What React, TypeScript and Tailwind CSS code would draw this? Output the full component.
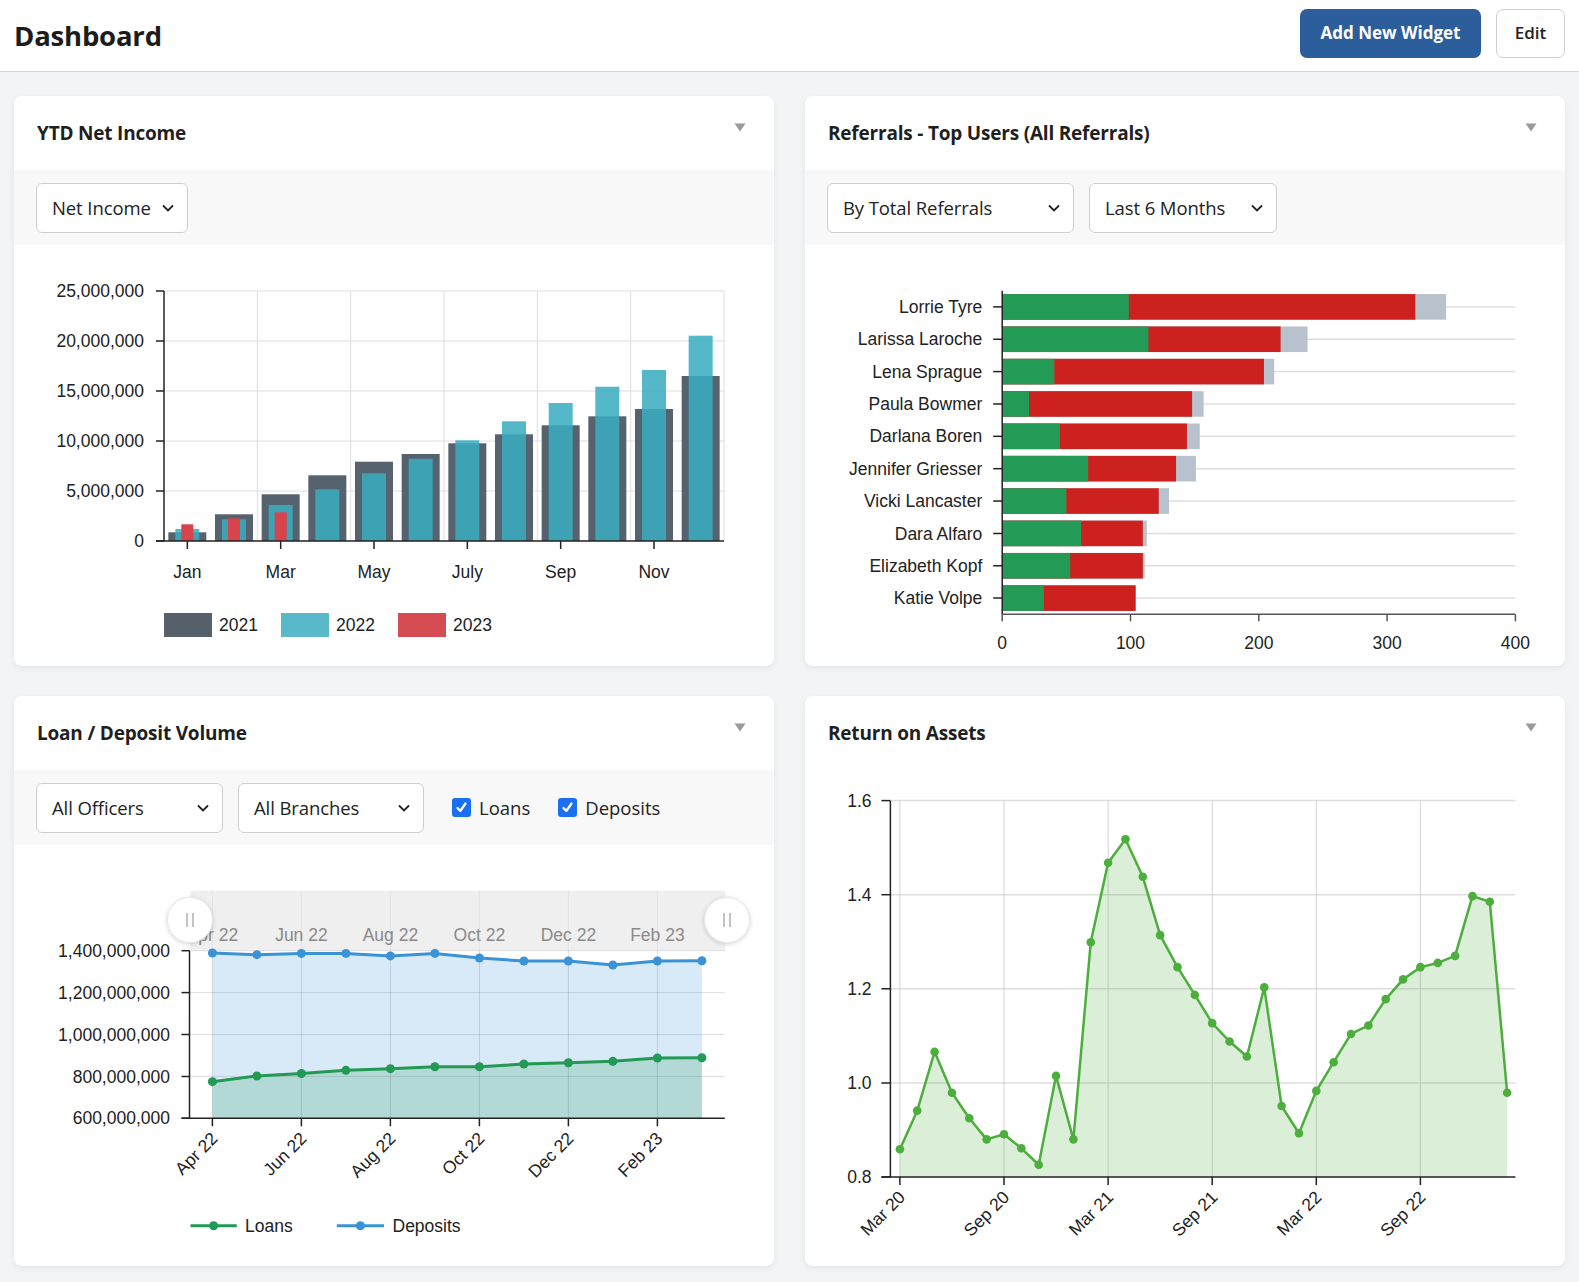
import React from 'react';

const CHART_FONT = '"Liberation Sans", Arial, sans-serif';
const AXIS = '#222';
const GRID = '#dedede';

function Triangle() {
  return (
    <svg width="12" height="9" viewBox="0 0 12 9" className="mt-[27px] self-start">
      <path d="M0.5 0.5 H11.5 L6 8.5 Z" fill="#9a9a9a" />
    </svg>
  );
}

function Chevron() {
  return (
    <svg width="12" height="8" viewBox="0 0 12 8">
      <polyline points="1,1.5 6,6.5 11,1.5" fill="none" stroke="#222" strokeWidth="1.8" />
    </svg>
  );
}

function Select({ label, className }: { label: string; className: string }) {
  return (
    <div
      className={`flex h-[50px] items-center justify-between rounded-[6px] border border-[#cfcfcf] bg-white pl-[15px] pr-[13px] text-[18.5px] tracking-[-0.1px] text-[#222] ${className}`}
    >
      <span>{label}</span>
      <Chevron />
    </div>
  );
}

function Check({ label }: { label: string }) {
  return (
    <label className="flex items-center gap-[8px] text-[18.5px] text-[#222]">
      <span className="flex h-[19px] w-[19px] items-center justify-center rounded-[3px] bg-[#1a6ff2]">
        <svg width="13" height="13" viewBox="0 0 13 13">
          <polyline points="2.5,7 5.3,10 10.5,2.5" fill="none" stroke="#fff" strokeWidth="2.3" strokeLinecap="round" strokeLinejoin="round" />
        </svg>
      </span>
      {label}
    </label>
  );
}

function Card({ title, children }: { title: string; children: React.ReactNode }) {
  return (
    <section className="flex h-[570px] flex-col overflow-hidden rounded-[8px] bg-white shadow-[0_2px_6px_rgba(0,0,0,0.07)]">
      <div className="flex h-[74px] shrink-0 items-center justify-between pl-[23px] pr-[28px]">
        <h2 className="text-[19px] font-bold tracking-[-0.2px] text-[#1f1f1f]">{title}</h2>
        <Triangle />
      </div>
      {children}
    </section>
  );
}

function FilterBar({ children }: { children: React.ReactNode }) {
  return <div className="flex h-[75px] shrink-0 items-center gap-[15px] bg-[#f8f8f8] px-[22px]">{children}</div>;
}

/* ---------- YTD Net Income ---------- */
const y2021 = [0.87, 2.67, 4.67, 6.57, 7.93, 8.7, 9.77, 10.67, 11.57, 12.47, 13.2, 16.5];
const y2022 = [1.2, 2.17, 3.6, 5.17, 6.77, 8.23, 10.07, 11.97, 13.8, 15.43, 17.1, 20.53];
const y2023 = [1.67, 2.27, 2.87];
const monthLabels = ['Jan', 'Mar', 'May', 'July', 'Sep', 'Nov'];

function NetIncomeChart() {
  const L = 150, R = 710, T = 46, B = 296;
  const mw = (R - L) / 12;
  const yv = (v: number) => B - v * 10;
  const cx = (i: number) => L + mw * (i + 0.5);
  return (
    <svg width="760" height="421" style={{ fontFamily: CHART_FONT }}>
      {[0, 5, 10, 15, 20, 25].map((v) => (
        <g key={v}>
          {v > 0 && <line x1={L} x2={R} y1={yv(v)} y2={yv(v)} stroke={GRID} />}
          <line x1={L - 8} x2={L} y1={yv(v)} y2={yv(v)} stroke={AXIS} strokeWidth="1.5" />
          <text x={L - 20} y={yv(v)} dy="0.35em" textAnchor="end" fontSize="17.5" fill={AXIS}>
            {v === 0 ? '0' : `${v},000,000`}
          </text>
        </g>
      ))}
      {[2, 4, 6, 8, 10, 12].map((k) => (
        <line key={k} x1={L + mw * k} x2={L + mw * k} y1={T} y2={B} stroke={GRID} />
      ))}
      {y2021.map((v, i) => (
        <rect key={`a${i}`} x={cx(i) - 19} y={yv(v)} width="38" height={v * 10} fill="#56626d" />
      ))}
      {y2022.map((v, i) => (
        <rect key={`b${i}`} x={cx(i) - 12} y={yv(v)} width="24" height={v * 10} fill="rgb(57,172,192)" fillOpacity="0.86" />
      ))}
      {y2023.map((v, i) => (
        <rect key={`c${i}`} x={cx(i) - 6} y={yv(v)} width="12" height={v * 10} fill="#d9434c" />
      ))}
      <line x1={L} x2={L} y1={T} y2={B} stroke={AXIS} strokeWidth="1.5" />
      <line x1={L - 8} x2={R} y1={B} y2={B} stroke={AXIS} strokeWidth="1.5" />
      {monthLabels.map((m, k) => (
        <g key={m}>
          <line x1={cx(k * 2)} x2={cx(k * 2)} y1={B} y2={B + 8} stroke={AXIS} strokeWidth="1.5" />
          <text x={cx(k * 2)} y={327} dy="0.35em" textAnchor="middle" fontSize="17.5" fill={AXIS}>
            {m}
          </text>
        </g>
      ))}
      {[
        { x: 150, c: '#56606b', t: '2021' },
        { x: 267, c: '#57b9ca', t: '2022' },
        { x: 384, c: '#d64c53', t: '2023' },
      ].map((l) => (
        <g key={l.t}>
          <rect x={l.x} y={368} width="48" height="24" fill={l.c} />
          <text x={l.x + 55} y={380} dy="0.35em" fontSize="17.5" fill={AXIS}>
            {l.t}
          </text>
        </g>
      ))}
    </svg>
  );
}

/* ---------- Referrals ---------- */
const referrals: [string, number, number, number][] = [
  ['Lorrie Tyre', 98.7, 322, 346],
  ['Larissa Laroche', 114, 217, 238],
  ['Lena Sprague', 40.6, 204, 212],
  ['Paula Bowmer', 21, 148, 157],
  ['Darlana Boren', 45, 144, 154],
  ['Jennifer Griesser', 67, 135.5, 151],
  ['Vicki Lancaster', 50, 122, 130],
  ['Dara Alfaro', 61.5, 109.6, 112.7],
  ['Elizabeth Kopf', 53, 109.6, 111],
  ['Katie Volpe', 32.5, 104, 104],
];

function ReferralsChart() {
  const X0 = 197.2, X1 = 710.4, T = 45.7, B = 369.3;
  const band = (B - T) / 10;
  const xv = (v: number) => X0 + (v / 400) * (X1 - X0);
  return (
    <svg width="760" height="421" style={{ fontFamily: CHART_FONT }}>
      {referrals.map(([name, g, r, t], i) => {
        const c = T + band * (i + 0.5);
        const y = c - 12.8;
        return (
          <g key={name}>
            <line x1={X0} x2={X1} y1={c} y2={c} stroke={GRID} strokeWidth="1.5" />
            <rect x={X0} y={y} width={xv(t) - X0} height="25.6" fill="#b8c2cc" />
            <rect x={X0} y={y} width={xv(r) - X0} height="25.6" fill="#cc211f" />
            <rect x={X0} y={y} width={xv(g) - X0} height="25.6" fill="#239b57" />
            <line x1={X0 - 9} x2={X0} y1={c} y2={c} stroke={AXIS} strokeWidth="1.5" />
            <text x={177.3} y={c} dy="0.35em" textAnchor="end" fontSize="17.5" fill={AXIS}>
              {name}
            </text>
          </g>
        );
      })}
      <line x1={X0} x2={X0} y1={T} y2={B} stroke={AXIS} strokeWidth="1.5" />
      <line x1={X0} x2={X1} y1={B} y2={B} stroke="#555" strokeWidth="1.5" />
      {[0, 100, 200, 300, 400].map((v) => (
        <g key={v}>
          <line x1={xv(v)} x2={xv(v)} y1={B} y2={B + 7} stroke="#555" strokeWidth="1.5" />
          <text x={xv(v)} y={398.3} dy="0.35em" textAnchor="middle" fontSize="17.5" fill={AXIS}>
            {v}
          </text>
        </g>
      ))}
    </svg>
  );
}

/* ---------- Loan / Deposit Volume ---------- */
const deposits = [1389, 1381, 1387, 1387, 1375, 1387, 1365, 1351, 1351, 1332, 1351, 1352];
const loans = [775, 802, 814, 829, 837, 846, 846, 859, 865, 872, 888, 889];
const ldLabels = ['Apr 22', 'Jun 22', 'Aug 22', 'Oct 22', 'Dec 22', 'Feb 23'];

function Handle({ x, y }: { x: number; y: number }) {
  return (
    <g>
      <circle cx={x} cy={y} r="22.5" fill="#fff" stroke="#e6e6e6" filter="url(#hshadow)" />
      <line x1={x - 3} x2={x - 3} y1={y - 7} y2={y + 7} stroke="#9a9a9a" strokeWidth="1.2" />
      <line x1={x + 3} x2={x + 3} y1={y - 7} y2={y + 7} stroke="#9a9a9a" strokeWidth="1.2" />
    </g>
  );
}

function LoanDepositChart() {
  const L = 175.5, R = 710.8, T = 105.7, B = 273.3;
  const xi = (i: number) => 198.4 + 44.5 * i;
  const yv = (v: number) => T + ((1400 - v) / 200) * 41.9;
  const line = (d: number[]) => d.map((v, i) => `${i ? 'L' : 'M'}${xi(i)},${yv(v)}`).join(' ');
  const area = (d: number[]) => `${line(d)} L${xi(d.length - 1)},${B} L${xi(0)},${B} Z`;
  return (
    <svg width="760" height="420" style={{ fontFamily: CHART_FONT }}>
      <defs>
        <filter id="hshadow" x="-50%" y="-50%" width="200%" height="200%">
          <feDropShadow dx="0" dy="1" stdDeviation="2" floodColor="#000" floodOpacity="0.18" />
        </filter>
      </defs>
      {/* navigator band */}
      <rect x={176.5} y={45.7} width={534.8} height={60} fill="#efefef" />
      {ldLabels.map((l, k) => (
        <g key={`n${l}`}>
          <line x1={xi(k * 2)} x2={xi(k * 2)} y1={45.7} y2={105.7} stroke="#e2e2e2" />
          <text x={xi(k * 2)} y={90} dy="0.35em" textAnchor="middle" fontSize="17.5" fill="#8a8a8a">
            {l}
          </text>
        </g>
      ))}
      {[1400, 1200, 1000, 800, 600].map((v) => (
        <g key={v}>
          {v !== 600 && <line x1={L} x2={R} y1={yv(v)} y2={yv(v)} stroke={GRID} />}
          <line x1={L - 8} x2={L} y1={yv(v)} y2={yv(v)} stroke={AXIS} strokeWidth="1.5" />
          <text x={156} y={yv(v)} dy="0.35em" textAnchor="end" fontSize="17.5" fill={AXIS}>
            {v >= 1000 ? `1,${String(v - 1000).padStart(3, '0')},000,000` : `${v},000,000`}
          </text>
        </g>
      ))}
      <path d={area(deposits)} fill="rgb(58,146,216)" fillOpacity="0.2" />
      <path d={area(loans)} fill="rgb(34,153,84)" fillOpacity="0.2" />
      {ldLabels.map((l, k) => (
        <line key={`g${l}`} x1={xi(k * 2)} x2={xi(k * 2)} y1={T} y2={B} stroke="#000" strokeOpacity="0.12" />
      ))}
      <path d={line(deposits)} fill="none" stroke="#3a93d6" strokeWidth="3" />
      <path d={line(loans)} fill="none" stroke="#229954" strokeWidth="3" />
      {deposits.map((v, i) => (
        <circle key={`d${i}`} cx={xi(i)} cy={yv(v)} r="4.5" fill="#3a93d6" />
      ))}
      {loans.map((v, i) => (
        <circle key={`l${i}`} cx={xi(i)} cy={yv(v)} r="4.5" fill="#229954" />
      ))}
      <line x1={L} x2={L} y1={T} y2={B} stroke={AXIS} strokeWidth="1.5" />
      <line x1={L - 8} x2={R} y1={B} y2={B} stroke={AXIS} strokeWidth="1.5" />
      {ldLabels.map((l, k) => (
        <g key={`x${l}`}>
          <line x1={xi(k * 2)} x2={xi(k * 2)} y1={B} y2={B + 8} stroke={AXIS} strokeWidth="1.5" />
          <text
            transform={`translate(${xi(k * 2) + 2},${B + 17}) rotate(-45)`}
            textAnchor="end"
            dy="0.35em"
            fontSize="17.5"
            fill={AXIS}
          >
            {l}
          </text>
        </g>
      ))}
      <Handle x={176} y={75} />
      <Handle x={713} y={75} />
      {/* legend */}
      <line x1={176.5} x2={222.8} y1={380.7} y2={380.7} stroke="#229954" strokeWidth="3" />
      <circle cx={199.6} cy={380.7} r="4.5" fill="#229954" />
      <text x={231} y={380.7} dy="0.35em" fontSize="17.5" fill={AXIS}>
        Loans
      </text>
      <line x1={322.8} x2={370} y1={380.7} y2={380.7} stroke="#3a93d6" strokeWidth="3" />
      <circle cx={346.4} cy={380.7} r="4.5" fill="#3a93d6" />
      <text x={378.5} y={380.7} dy="0.35em" fontSize="17.5" fill={AXIS}>
        Deposits
      </text>
    </svg>
  );
}

/* ---------- Return on Assets ---------- */
const roa = [
  0.859, 0.941, 1.066, 0.979, 0.925, 0.88, 0.891, 0.861, 0.826, 1.015, 0.88, 1.299, 1.468, 1.518, 1.438, 1.314,
  1.246, 1.187, 1.127, 1.088, 1.056, 1.203, 0.951, 0.893, 0.983, 1.044, 1.104, 1.122, 1.178, 1.22, 1.246, 1.255,
  1.27, 1.397, 1.385, 0.979,
];
const roaLabels = ['Mar 20', 'Sep 20', 'Mar 21', 'Sep 21', 'Mar 22', 'Sep 22'];

function RoaChart() {
  const L = 85.4, R = 710.4, T = 30.7, B = 407;
  const xi = (i: number) => 94.9 + 17.35 * i;
  const yv = (v: number) => B - ((v - 0.8) / 0.2) * 94.1;
  const line = roa.map((v, i) => `${i ? 'L' : 'M'}${xi(i)},${yv(v)}`).join(' ');
  const area = `${line} L${xi(roa.length - 1)},${B} L${xi(0)},${B} Z`;
  return (
    <svg width="760" height="495" style={{ fontFamily: CHART_FONT }}>
      {[1.6, 1.4, 1.2, 1.0, 0.8].map((v) => (
        <g key={v}>
          {v > 0.85 && <line x1={L} x2={R} y1={yv(v)} y2={yv(v)} stroke={GRID} strokeWidth="1.5" />}
          <line x1={L - 9} x2={L} y1={yv(v)} y2={yv(v)} stroke={AXIS} strokeWidth="1.5" />
          <text x={66.5} y={yv(v)} dy="0.35em" textAnchor="end" fontSize="17.5" fill={AXIS}>
            {v.toFixed(1)}
          </text>
        </g>
      ))}
      {roaLabels.map((l, k) => (
        <line key={`g${l}`} x1={xi(k * 6)} x2={xi(k * 6)} y1={T} y2={B} stroke="#d4d4d4" />
      ))}
      <path d={area} fill="rgb(76,175,60)" fillOpacity="0.2" />
      <path d={line} fill="none" stroke="#4cae3c" strokeWidth="2.5" strokeLinejoin="round" />
      {roa.map((v, i) => (
        <circle key={i} cx={xi(i)} cy={yv(v)} r="4.3" fill="#4cae3c" />
      ))}
      <line x1={L} x2={L} y1={T} y2={B} stroke={AXIS} strokeWidth="1.5" />
      <line x1={L - 9} x2={R} y1={B} y2={B} stroke={AXIS} strokeWidth="1.5" />
      {roaLabels.map((l, k) => (
        <g key={`x${l}`}>
          <line x1={xi(k * 6)} x2={xi(k * 6)} y1={B} y2={B + 8} stroke={AXIS} strokeWidth="1.5" />
          <text
            transform={`translate(${xi(k * 6) + 2},${B + 17}) rotate(-45)`}
            textAnchor="end"
            dy="0.35em"
            fontSize="17.5"
            fill={AXIS}
          >
            {l}
          </text>
        </g>
      ))}
    </svg>
  );
}

export default function App() {
  return (
    <div className="min-h-[1282px] bg-[#f3f4f6] font-['Open_Sans',sans-serif]">
      <header className="flex h-[72px] items-center justify-between border-b border-[#d6d6d6] bg-white px-[14px]">
        <h1 className="text-[27.5px] font-bold leading-none tracking-[-0.2px] text-[#1c1c1c]">Dashboard</h1>
        <div className="mb-[5px] flex gap-[15px]">
          <button className="h-[49px] w-[181px] rounded-[7px] bg-[#2c5e9c] text-[17px] font-bold text-white">
            Add New Widget
          </button>
          <button className="h-[49px] w-[69px] rounded-[7px] border border-[#cfcfcf] bg-white text-[17px] font-semibold text-[#222]">
            Edit
          </button>
        </div>
      </header>
      <main className="grid grid-cols-2 gap-x-[31px] gap-y-[30px] px-[14px] pb-[17px] pt-[24px]">
        <Card title="YTD Net Income">
          <FilterBar>
            <Select label="Net Income" className="w-[152px]" />
          </FilterBar>
          <NetIncomeChart />
        </Card>
        <Card title="Referrals - Top Users (All Referrals)">
          <FilterBar>
            <Select label="By Total Referrals" className="w-[247px]" />
            <Select label="Last 6 Months" className="w-[188px]" />
          </FilterBar>
          <ReferralsChart />
        </Card>
        <Card title="Loan / Deposit Volume">
          <FilterBar>
            <Select label="All Officers" className="w-[187px]" />
            <Select label="All Branches" className="mr-[13px] w-[186px]" />
            <div className="flex items-center gap-[28px]">
              <Check label="Loans" />
              <Check label="Deposits" />
            </div>
          </FilterBar>
          <LoanDepositChart />
        </Card>
        <Card title="Return on Assets">
          <RoaChart />
        </Card>
      </main>
    </div>
  );
}
